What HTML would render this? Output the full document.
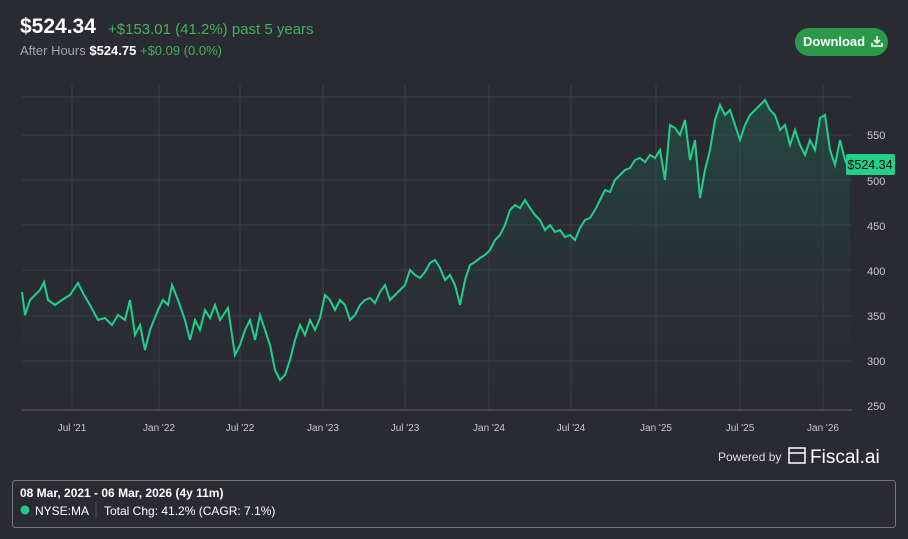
<!DOCTYPE html>
<html><head><style>
body{margin:0;width:908px;height:539px;background:#2a2a33;font-family:"Liberation Sans",sans-serif;position:relative;overflow:hidden;color:#fff}
.t{position:absolute;white-space:nowrap}
</style></head><body>
<div class="t" style="left:20px;top:15px;font-size:21px;font-weight:bold;color:#fff">$524.34</div>
<div class="t" style="left:108px;top:21px;font-size:15px;color:#3fb35a">+$153.01 (41.2%) past 5 years</div>
<div class="t" style="left:20px;top:43px;font-size:13px;color:#a3a3ab">After Hours <b style="color:#fff">$524.75</b> <span style="color:#3fb35a">+$0.09 (0.0%)</span></div>
<div class="t" style="left:795px;top:28px;width:93px;height:28px;border-radius:14px;background:#2a9a4a;font-size:13px;font-weight:bold;line-height:28px;text-align:left;padding-left:8px;box-sizing:border-box">Download
<svg width="12" height="12" viewBox="0 0 12 12" style="vertical-align:-1px;margin-left:2px"><path d="M6 1v7M3 5l3 3 3-3M1 8v3h10V8" stroke="#fff" stroke-width="1.6" fill="none"/></svg></div>
<svg width="908" height="539" style="position:absolute;left:0;top:0">
<defs><linearGradient id="g" x1="0" y1="0" x2="0" y2="1"><stop offset="0" stop-color="#1e6a52" stop-opacity="0.8"/><stop offset="1" stop-color="#2a2a33" stop-opacity="0.2"/></linearGradient></defs>
<g stroke="#3e3e48" stroke-width="1">
<line x1="22" y1="97" x2="852" y2="97"/><line x1="22" y1="135" x2="852" y2="135"/><line x1="22" y1="180" x2="852" y2="180"/><line x1="22" y1="225" x2="852" y2="225"/><line x1="22" y1="270" x2="852" y2="270"/><line x1="22" y1="316" x2="852" y2="316"/><line x1="22" y1="361" x2="852" y2="361"/>
<line x1="72" y1="85" x2="72" y2="410"/><line x1="159" y1="85" x2="159" y2="410"/><line x1="240" y1="85" x2="240" y2="410"/><line x1="323" y1="85" x2="323" y2="410"/><line x1="405" y1="85" x2="405" y2="410"/><line x1="489" y1="85" x2="489" y2="410"/><line x1="571" y1="85" x2="571" y2="410"/><line x1="656" y1="85" x2="656" y2="410"/><line x1="740" y1="85" x2="740" y2="410"/><line x1="823" y1="85" x2="823" y2="410"/>
</g>
<line x1="22" y1="410" x2="852" y2="410" stroke="#666" stroke-width="1"/>
<path d="M22,292 L25,315 30,300 40,290 44,282 48,300 55,305 62,300 70,295 78,283 84,295 90,305 98,320 105,318 112,325 118,315 125,320 130,300 135,335 140,325 145,350 150,330 158,310 163,300 168,305 172,285 178,300 185,320 190,340 195,320 200,330 205,310 210,318 215,305 220,320 228,308 235,355 240,345 245,330 250,320 255,340 260,315 265,330 270,345 275,370 280,380 285,375 290,360 295,340 300,325 305,335 310,320 315,330 320,318 325,295 330,300 335,310 340,300 345,305 350,320 355,315 360,305 365,300 370,298 375,303 380,292 385,285 390,300 395,295 400,290 405,285 410,270 415,275 420,278 425,272 430,263 435,260 440,268 445,280 450,275 455,285 460,305 465,280 470,265 475,262 480,258 485,255 490,250 495,240 500,235 505,225 510,210 515,205 520,208 525,200 530,208 535,215 540,220 545,230 550,225 555,232 560,230 565,237 570,235 575,240 580,228 585,220 590,218 595,210 600,200 605,190 610,192 615,180 620,175 625,170 630,168 635,160 640,158 645,162 650,155 655,158 660,150 665,180 670,125 675,128 680,135 685,120 690,160 695,140 700,198 705,170 710,150 715,120 720,105 725,115 730,110 735,125 740,140 745,125 750,115 755,110 760,105 765,100 770,110 775,115 780,130 785,125 790,145 795,130 800,145 805,155 810,140 815,150 820,118 825,115 830,150 835,165 840,140 845,160 850,172 L850,410 L22,410Z" fill="url(#g)" opacity="0.6"/>
<path d="M22,292 L25,315 30,300 40,290 44,282 48,300 55,305 62,300 70,295 78,283 84,295 90,305 98,320 105,318 112,325 118,315 125,320 130,300 135,335 140,325 145,350 150,330 158,310 163,300 168,305 172,285 178,300 185,320 190,340 195,320 200,330 205,310 210,318 215,305 220,320 228,308 235,355 240,345 245,330 250,320 255,340 260,315 265,330 270,345 275,370 280,380 285,375 290,360 295,340 300,325 305,335 310,320 315,330 320,318 325,295 330,300 335,310 340,300 345,305 350,320 355,315 360,305 365,300 370,298 375,303 380,292 385,285 390,300 395,295 400,290 405,285 410,270 415,275 420,278 425,272 430,263 435,260 440,268 445,280 450,275 455,285 460,305 465,280 470,265 475,262 480,258 485,255 490,250 495,240 500,235 505,225 510,210 515,205 520,208 525,200 530,208 535,215 540,220 545,230 550,225 555,232 560,230 565,237 570,235 575,240 580,228 585,220 590,218 595,210 600,200 605,190 610,192 615,180 620,175 625,170 630,168 635,160 640,158 645,162 650,155 655,158 660,150 665,180 670,125 675,128 680,135 685,120 690,160 695,140 700,198 705,170 710,150 715,120 720,105 725,115 730,110 735,125 740,140 745,125 750,115 755,110 760,105 765,100 770,110 775,115 780,130 785,125 790,145 795,130 800,145 805,155 810,140 815,150 820,118 825,115 830,150 835,165 840,140 845,160 850,172" fill="none" stroke="#20d08a" stroke-width="2"/>
<g fill="#c8c8cc" font-size="11" font-family="Liberation Sans">
<text x="867" y="139">550</text><text x="867" y="185">500</text><text x="867" y="230">450</text><text x="867" y="275">400</text><text x="867" y="320">350</text><text x="867" y="365">300</text><text x="867" y="410">250</text>
</g>
<g fill="#c8c8cc" font-size="10" font-family="Liberation Sans" text-anchor="middle">
<text x="72" y="431">Jul '21</text><text x="159" y="431">Jan '22</text><text x="240" y="431">Jul '22</text><text x="323" y="431">Jan '23</text><text x="405" y="431">Jul '23</text><text x="489" y="431">Jan '24</text><text x="571" y="431">Jul '24</text><text x="656" y="431">Jan '25</text><text x="740" y="431">Jul '25</text><text x="823" y="431">Jan '26</text>
</g>
<rect x="846" y="154" width="49" height="21" rx="2" fill="#22d08c"/>
<text x="870" y="169" font-size="13" fill="#000" font-family="Liberation Sans" text-anchor="middle" textLength="45" lengthAdjust="spacingAndGlyphs">$524.34</text>
<text x="718" y="461" font-size="12" fill="#ddd" font-family="Liberation Sans">Powered by</text>
<rect x="789" y="448" width="16" height="15" fill="none" stroke="#fff" stroke-width="1.5"/>
<line x1="789" y1="453" x2="805" y2="453" stroke="#fff" stroke-width="1.5"/>
<text x="810" y="463" font-size="19" fill="#fff" font-family="Liberation Sans">Fiscal.ai</text>
<rect x="12.5" y="480.5" width="883" height="47" rx="3" fill="none" stroke="#777"/>
<text x="20" y="497" font-size="12" font-weight="bold" fill="#fff" font-family="Liberation Sans">08 Mar, 2021 - 06 Mar, 2026 (4y 11m)</text>
<circle cx="25" cy="510" r="4.5" fill="#22c98a"/>
<text x="35" y="515" font-size="12" fill="#fff" font-family="Liberation Sans">NYSE:MA</text>
<line x1="96" y1="502" x2="96" y2="518" stroke="#555"/>
<text x="104" y="515" font-size="12" fill="#fff" font-family="Liberation Sans">Total Chg: 41.2% (CAGR: 7.1%)</text>
</svg>
</body></html>
